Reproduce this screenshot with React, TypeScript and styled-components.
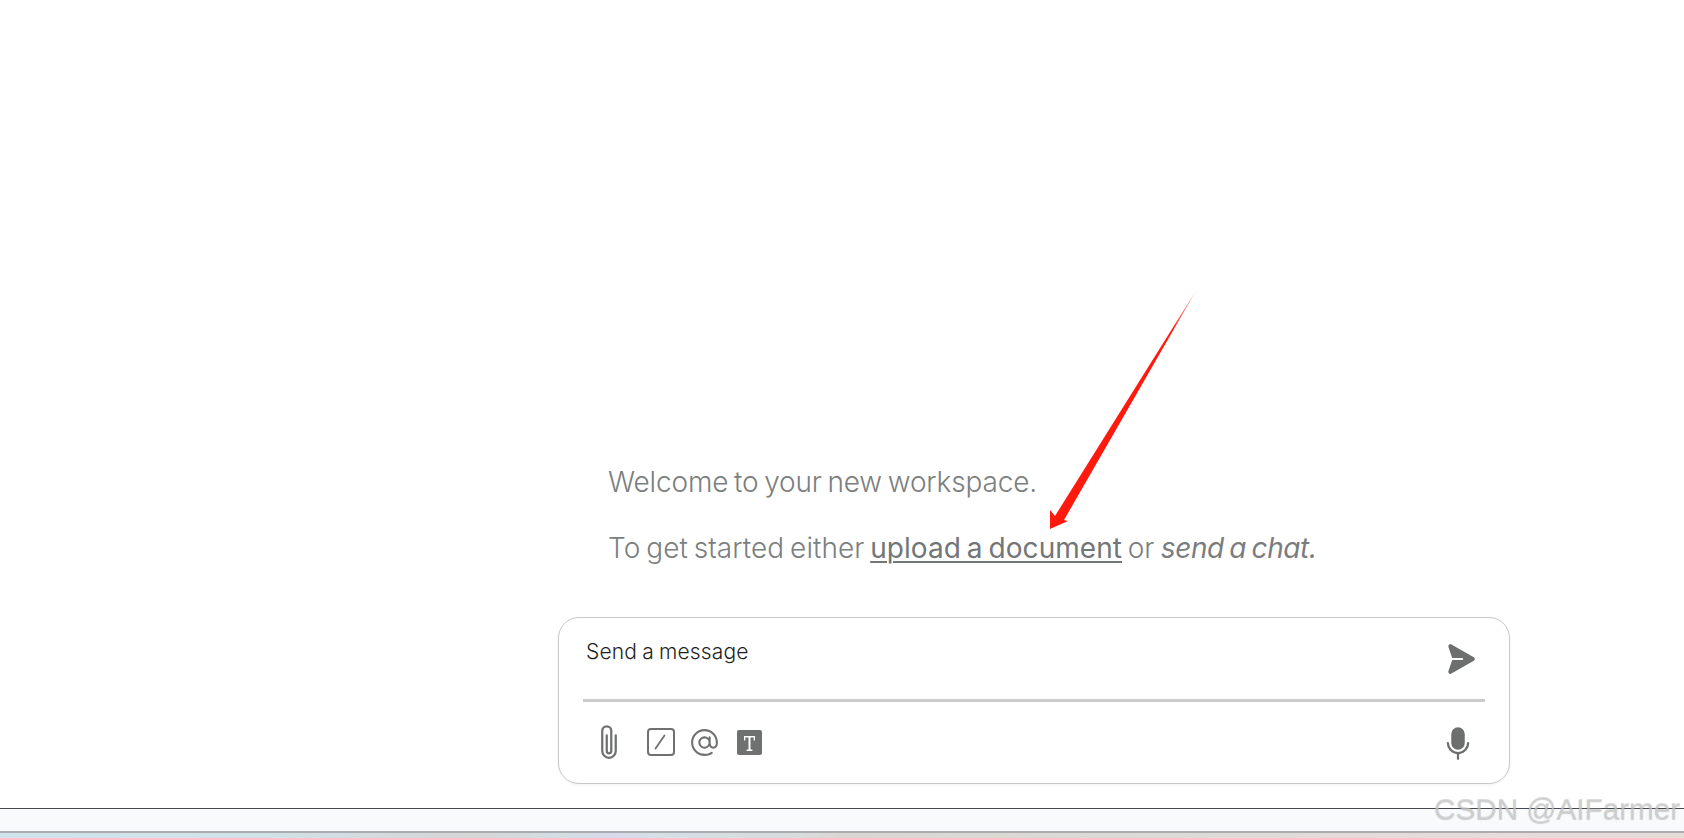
import React from "react";
import styled, { createGlobalStyle } from "styled-components";
import { PiPaperPlaneRightFill, PiMicrophoneFill, PiAt, PiPaperclipHorizontal } from "react-icons/pi";

const Global = createGlobalStyle`
  html, body { margin: 0; padding: 0; background: #fff; }
  body { font-family: "Inter", "Liberation Sans", sans-serif; overflow: hidden; }
`;

const Page = styled.div`
  position: relative;
  width: 1684px;
  height: 838px;
  display: flex;
  flex-direction: column;
  overflow: hidden;
`;

const Main = styled.main`
  flex: 1;
  display: flex;
  flex-direction: column;
  justify-content: flex-end;
  padding: 0 0 24px 558px;
`;

const Welcome = styled.div`
  padding-left: 50px;
  margin-bottom: 52px;
  color: #7c7f80;
  font-size: 28px;
  line-height: 34px;
  letter-spacing: -0.15px;
  word-spacing: -2px;
  font-weight: 300;
  display: flex;
  flex-direction: column;
  gap: 32px;
`;

const Line = styled.p`
  margin: 0;
  white-space: nowrap;
`;

const Lead = styled.span`
  letter-spacing: 0.05px;
`;

const UploadLink = styled.a`
  color: #737677;
  font-weight: 400;
  letter-spacing: 0.05px;
  text-decoration: underline;
  text-underline-offset: 3px;
  text-decoration-thickness: 2px;
`;

const Emphasis = styled.em`
  font-style: italic;
  font-weight: 400;
  letter-spacing: -0.4px;
  margin-left: 1px;
  color: #7a7d7f;
`;

const Composer = styled.section`
  box-sizing: border-box;
  width: 952px;
  height: 167px;
  border: 1px solid #c9c9c9;
  border-radius: 21px;
  background: #fff;
  box-shadow: 0 1px 3px rgba(0, 0, 0, 0.06);
  padding: 0 24px;
  display: flex;
  flex-direction: column;
`;

const InputRow = styled.div`
  height: 60px;
  display: flex;
  justify-content: space-between;
  border-bottom: 3px solid #cbcbcb;
  padding: 21px 0 0 3px;
`;

const Placeholder = styled.span`
  font-size: 21px;
  line-height: 26px;
  letter-spacing: 0.17px;
  word-spacing: -1px;
  font-weight: 300;
  color: #1f1f1f;
`;

const SendIcon = styled(PiPaperPlaneRightFill)`
  width: 34px;
  height: 34px;
  color: #6d6f6f;
  margin: 3px 8px 0 0;
`;

const ToolRow = styled.div`
  flex: 1;
  display: flex;
  align-items: center;
  justify-content: space-between;
  padding: 0 9px 1px 8px;
`;

const ToolGroup = styled.div`
  display: flex;
  align-items: center;
`;

const ClipIcon = styled(PiPaperclipHorizontal)`
  width: 36px;
  height: 36px;
  color: #6f7170;
  transform: rotate(90deg);
  margin-right: 20px;
`;

const ToolIcon = styled.svg<{ $gap?: number }>`
  display: block;
  color: #6f7170;
  margin-right: ${(p) => p.$gap ?? 0}px;
`;

const AtIcon = styled(PiAt)`
  width: 33px;
  height: 33px;
  color: #6f7170;
  margin-right: 16px;
`;

const MicIcon = styled(PiMicrophoneFill)`
  width: 36px;
  height: 36px;
  color: #6d6f6f;
  margin-top: 2px;
`;

const StatusBar = styled.footer`
  height: 23px;
  flex: none;
  box-sizing: border-box;
  background: #f9fafc;
  border-top: 1px solid #46484c;
`;

const Strip = styled.div`
  height: 7px;
  flex: none;
  box-sizing: border-box;
  border-top: 2px solid #aaacb0;
  background: linear-gradient(90deg, #cfe4ec 0, #d0e2e8 260px, #d6d6d6 470px, #d2dee2 560px, #d8daec 610px, #d4e0e6 660px, #d8dcdb 800px, #dcd6d2 840px, #dbdad4 1100px, #e8dcdc 1500px, #e6dcd8 1684px);
`;

const Arrow = styled.svg`
  position: absolute;
  left: 0;
  top: 0;
  width: 1684px;
  height: 838px;
  pointer-events: none;
`;

const Watermark = styled.div`
  position: absolute;
  left: 1434px;
  top: 792px;
  font-family: "Liberation Sans", Arial, sans-serif;
  font-size: 29.7px;
  line-height: 34px;
  color: rgba(205, 205, 205, 0.7);
  text-shadow: 0 1px 1px rgba(120, 120, 120, 0.35);
  white-space: nowrap;
`;

export default function App() {
  return (
    <Page>
      <Global />
      <Main>
        <Welcome>
          <Line>Welcome to your new workspace.</Line>
          <Line>
            <Lead>To get started either </Lead>
            <UploadLink>upload a document</UploadLink> or <Emphasis>send a chat.</Emphasis>
          </Line>
        </Welcome>
        <Composer>
          <InputRow>
            <Placeholder>Send a message</Placeholder>
            <SendIcon />
          </InputRow>
          <ToolRow>
            <ToolGroup>
              <ClipIcon />
              <ToolIcon $gap={13} width="28" height="28" viewBox="0 0 28 28" fill="none" stroke="currentColor" strokeLinecap="round">
                <rect x="1" y="1" width="26" height="26" rx="3" strokeWidth="2" />
                <path d="M8.500 20.500L17.500 7.500" strokeWidth="1.800" />
              </ToolIcon>
              <AtIcon />
              <ToolIcon width="25" height="25" viewBox="0 0 25 25" fill="currentColor">
                <path fillRule="evenodd" d="M2 0H23a2 2 0 0 1 2 2V23a2 2 0 0 1-2 2H2a2 2 0 0 1-2-2V2a2 2 0 0 1 2-2Z M7 6V10.500H8.300V7.600H11.500V19.400H9.600V21H15.400V19.400H13.500V7.600H16.700V10.500H18V6Z" />
              </ToolIcon>
            </ToolGroup>
            <MicIcon />
          </ToolRow>
        </Composer>
      </Main>
      <StatusBar />
      <Strip />
      <Arrow viewBox="0 0 1684 838">
        <defs>
          <linearGradient id="tail" x1="1197" y1="289" x2="1172" y2="330" gradientUnits="userSpaceOnUse">
            <stop offset="0" stopColor="#ff1a0e" stopOpacity="0.3" />
            <stop offset="1" stopColor="#ff1a0e" />
          </linearGradient>
        </defs>
        <polygon points="1197,289 1064,520 1068,521 1050,529 1050,510 1055,516" fill="url(#tail)" />
      </Arrow>
      <Watermark>CSDN @AIFarmer</Watermark>
    </Page>
  );
}
